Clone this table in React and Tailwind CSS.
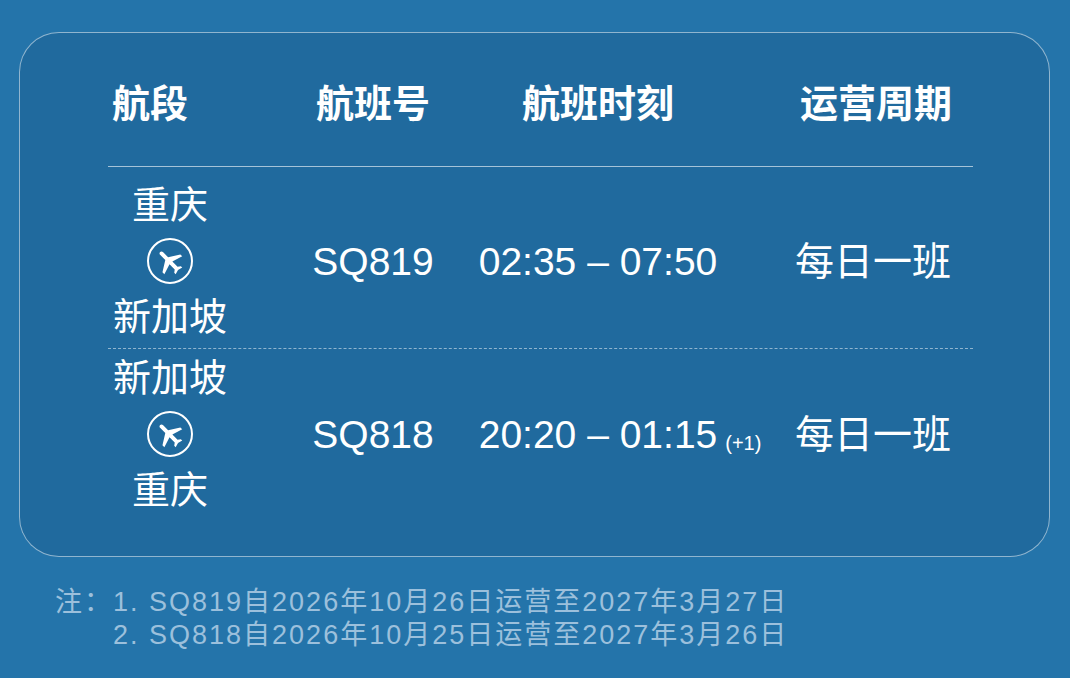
import React from "react";

const flights = [
  { from: "重庆", to: "新加坡", no: "SQ819", time: "02:35 – 07:50", extra: "", freq: "每日一班" },
  { from: "新加坡", to: "重庆", no: "SQ818", time: "20:20 – 01:15", extra: "(+1)", freq: "每日一班" },
];

const PlaneIcon = () => (
  <div className="w-[46px] h-[46px] rounded-full border-2 border-white flex items-center justify-center">
    <svg viewBox="0 0 24 24" className="w-[32px] h-[32px] -rotate-45" fill="white">
      <path d="M21 16v-2l-8-5V3.5c0-.83-.67-1.5-1.5-1.5S10 2.67 10 3.5V9l-8 5v2l8-2.5V19l-2 1.5V22l3.5-1 3.5 1v-1.5L13 19v-5.5l8 2.5z" />
    </svg>
  </div>
);

const App = () => {
  return (
    <div className="w-[1070px] h-[678px] bg-[#2474aa] pt-[32px] pl-[19px] overflow-hidden font-['Liberation_Sans','Noto_Sans_CJK_SC',sans-serif]">
      <div className="w-[1031px] h-[525px] rounded-[40px] border border-white/50 bg-[#206a9e] pl-[88px]">
        {/* header */}
        <div className="w-[865px] h-[134px] pt-[3px] border-b border-white/60 grid grid-cols-[124px_282px_168px_291px] items-center text-white text-[38px] font-bold font-['Noto_Sans_CJK_SC',sans-serif] leading-none">
          <div className="pl-[4px]">航段</div>
          <div className="text-center">航班号</div>
          <div className="text-center whitespace-nowrap">航班时刻</div>
          <div className="text-right pr-[21px]">运营周期</div>
        </div>

        {flights.map((f, i) => (
          <div
            key={f.no}
            className={`w-[865px] grid grid-cols-[124px_282px_168px_291px] items-center text-white ${
              i === 0 ? "h-[182px] pt-[10px] pb-[3px] border-b border-dashed border-white/50" : "pt-[1px]"
            }`}
          >
            <div className="flex flex-col items-center font-['Noto_Sans_CJK_SC',sans-serif] text-[38px]">
              <div className="h-[56px] leading-[50px]">{f.from}</div>
              <div className="h-[56px] flex items-center justify-center">
                <PlaneIcon />
              </div>
              <div className="h-[56px] leading-[50px]">{f.to}</div>
            </div>
            <div className="text-center text-[39px] leading-none">{f.no}</div>
            <div className="flex justify-center whitespace-nowrap text-[39px] leading-none">
              <span className="relative">
                {f.time}
                {f.extra && (
                  <span className="absolute left-full bottom-[1px] ml-[8px] text-[20px]">{f.extra}</span>
                )}
              </span>
            </div>
            <div className="text-right pr-[22px] pb-[6px] font-['Noto_Sans_CJK_SC',sans-serif] text-[39px] leading-none">
              {f.freq}
            </div>
          </div>
        ))}
      </div>

      {/* notes */}
      <div className="mt-[29px] ml-[36px] flex text-[#9cc0dc] text-[27px] leading-[33px] tracking-[2px] whitespace-nowrap">
        <span>注：</span>
        <div>
          <div>1. SQ819自2026年10月26日运营至2027年3月27日</div>
          <div>2. SQ818自2026年10月25日运营至2027年3月26日</div>
        </div>
      </div>
    </div>
  );
};

export default App;
